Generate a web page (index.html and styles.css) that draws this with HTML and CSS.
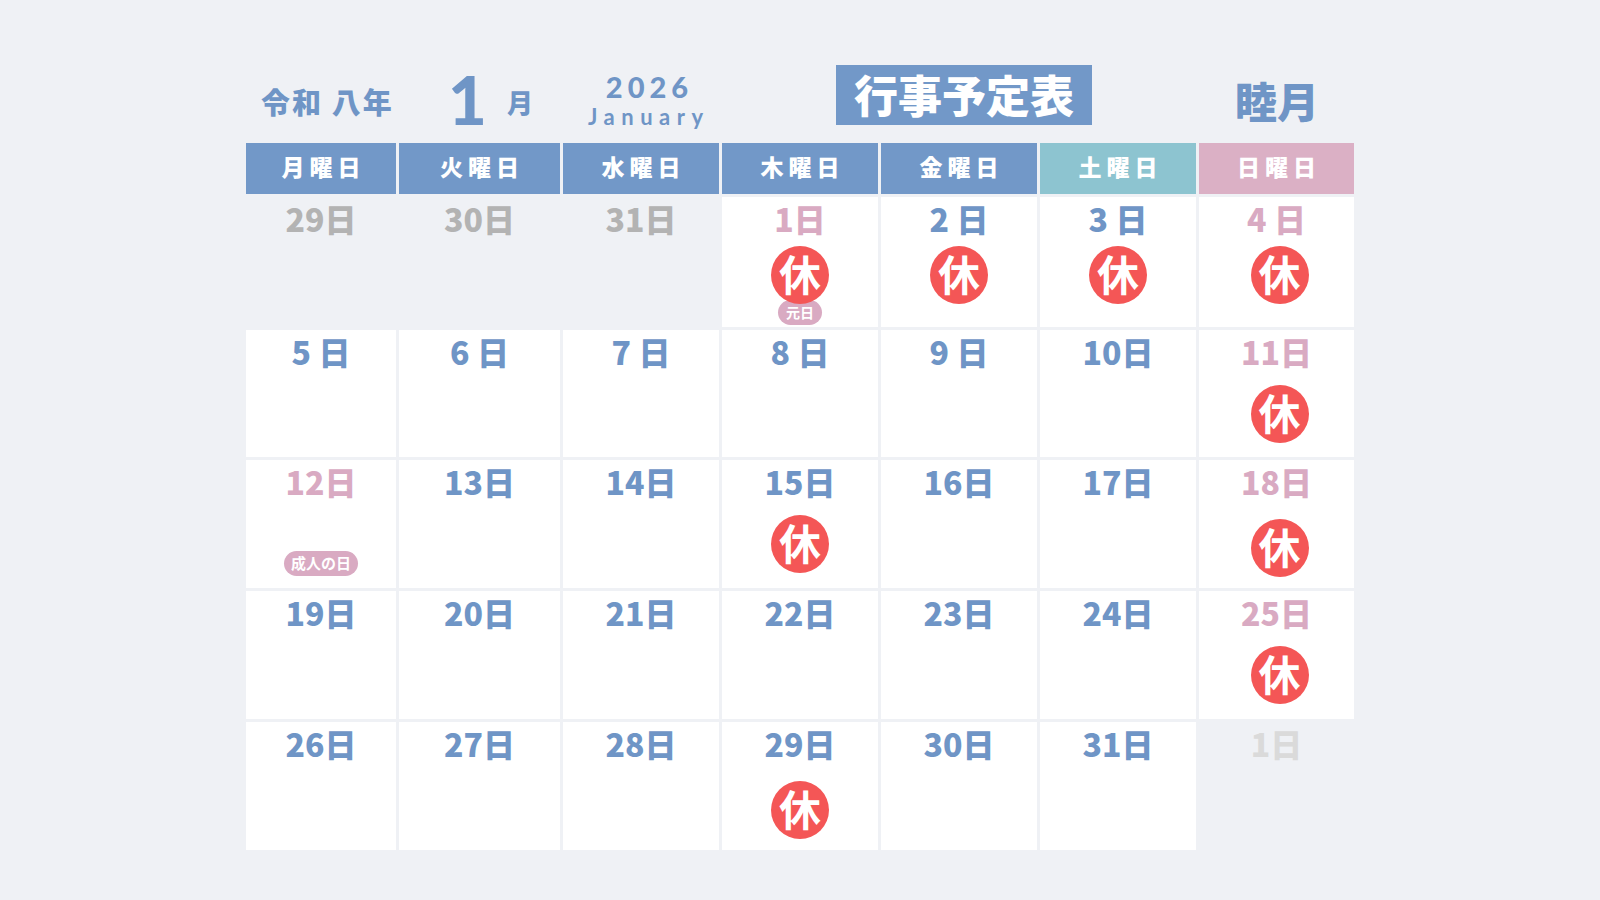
FILE: index.html
```html
<!DOCTYPE html>
<html lang="ja">
<head>
<meta charset="utf-8">
<title>行事予定表 2026年1月</title>
<link rel="stylesheet" href="styles.css">
</head>
<body>
<div class="page">
  <header class="top">
    <div class="era">令和 八年</div>
    <div class="month"><span class="month-num">1</span><span class="month-unit">月</span></div>
    <div class="year"><div class="year-num">2026</div><div class="year-en">January</div></div>
    <h1 class="title">行事予定表</h1>
    <div class="wafu">睦月</div>
  </header>
  <div class="cal">
    <div class="wd">月曜日</div>
    <div class="wd">火曜日</div>
    <div class="wd">水曜日</div>
    <div class="wd">木曜日</div>
    <div class="wd">金曜日</div>
    <div class="wd sat">土曜日</div>
    <div class="wd sun">日曜日</div>

    <div class="day other prev"><span class="num">29日</span></div>
    <div class="day other prev"><span class="num">30日</span></div>
    <div class="day other prev"><span class="num">31日</span></div>
    <div class="day holiday"><span class="num">1日</span><span class="rest rest-up">休</span><span class="tag tag-under">元日</span></div>
    <div class="day"><span class="num">2 日</span><span class="rest rest-up">休</span></div>
    <div class="day"><span class="num">3 日</span><span class="rest rest-up">休</span></div>
    <div class="day holiday sunday"><span class="num">4 日</span><span class="rest rest-up">休</span></div>

    <div class="day"><span class="num">5 日</span></div>
    <div class="day"><span class="num">6 日</span></div>
    <div class="day"><span class="num">7 日</span></div>
    <div class="day"><span class="num">8 日</span></div>
    <div class="day"><span class="num">9 日</span></div>
    <div class="day"><span class="num">10日</span></div>
    <div class="day holiday sunday"><span class="num">11日</span><span class="rest">休</span></div>

    <div class="day holiday"><span class="num">12日</span><span class="tag tag-bottom">成人の日</span></div>
    <div class="day"><span class="num">13日</span></div>
    <div class="day"><span class="num">14日</span></div>
    <div class="day"><span class="num">15日</span><span class="rest">休</span></div>
    <div class="day"><span class="num">16日</span></div>
    <div class="day"><span class="num">17日</span></div>
    <div class="day holiday sunday"><span class="num">18日</span><span class="rest rest-low">休</span></div>

    <div class="day"><span class="num">19日</span></div>
    <div class="day"><span class="num">20日</span></div>
    <div class="day"><span class="num">21日</span></div>
    <div class="day"><span class="num">22日</span></div>
    <div class="day"><span class="num">23日</span></div>
    <div class="day"><span class="num">24日</span></div>
    <div class="day holiday sunday"><span class="num">25日</span><span class="rest">休</span></div>

    <div class="day"><span class="num">26日</span></div>
    <div class="day"><span class="num">27日</span></div>
    <div class="day"><span class="num">28日</span></div>
    <div class="day"><span class="num">29日</span><span class="rest rest-low">休</span></div>
    <div class="day"><span class="num">30日</span></div>
    <div class="day"><span class="num">31日</span></div>
    <div class="day other next"><span class="num">1日</span></div>
  </div>
</div>
</body>
</html>
```

FILE: styles.css
```css
html, body {
  margin: 0;
  padding: 0;
}

body {
  width: 1600px;
  height: 900px;
  overflow: hidden;
  background: #eff1f5;
  color: #6f95c6;
  font-family: "Noto Sans CJK JP", "Noto Sans", sans-serif;
}

.page {
  padding: 62px 0 0 246px;
  width: 1108px;
}

/* ---------- title row ---------- */
.top {
  display: flex;
  align-items: center;
  height: 80px;
  margin-bottom: 1px;
}

.era {
  width: 193px;
  padding-left: 15px;
  font-size: 29px;
  font-weight: 900;
  letter-spacing: 2px;
  line-height: 1;
  white-space: nowrap;
  margin-bottom: 2px;
}

.month {
  width: 134px;
  display: flex;
  align-items: center;
}

.month-num {
  font-family: "Lato", "Liberation Sans", sans-serif;
  font-size: 67px;
  font-weight: 900;
  line-height: 1;
  margin-left: -6px;
  margin-bottom: 5px;
}

.month-unit {
  font-size: 26px;
  font-weight: 900;
  line-height: 1;
  margin-left: 20px;
}

.year {
  width: 118px;
  margin-right: 130px;
  margin-bottom: 4px;
  text-align: center;
  font-family: "Lato", "Liberation Sans", sans-serif;
  font-weight: 900;
  line-height: 1;
}

.year-num {
  font-size: 29px;
  letter-spacing: 5px;
  padding-left: 5px;
}

.year-en {
  font-size: 22px;
  letter-spacing: 6.5px;
  padding-right: 5px;
  margin-top: 5px;
  font-weight: 700;
}

.title {
  margin: 0 0 14px 0;
  width: 256px;
  height: 60px;
  background: #7298c8;
  color: #ffffff;
  font-size: 44px;
  font-weight: 900;
  line-height: 58px;
  text-align: center;
  white-space: nowrap;
}

.wafu {
  margin-left: 143px;
  margin-bottom: 4px;
  font-size: 42px;
  font-weight: 900;
  line-height: 1;
  white-space: nowrap;
}

/* ---------- calendar grid ---------- */
.cal {
  display: grid;
  grid-template-columns: 150px 161px 156px 156px 156px 156px 155px;
  grid-template-rows: 51px 130px 127px 128px 128px 128px;
  gap: 3px;
}

.wd {
  display: flex;
  align-items: center;
  justify-content: center;
  background: #7298c8;
  color: #ffffff;
  font-size: 23px;
  font-weight: 900;
  letter-spacing: 5px;
  padding-left: 5px;
  padding-bottom: 4px;
  line-height: 1;
}

.wd.sat {
  background: #8dc4d0;
}

.wd.sun {
  background: #dbb0c5;
}

.day {
  background: #ffffff;
  display: flex;
  flex-direction: column;
  align-items: center;
}

.day.other {
  background: transparent;
}

.num {
  padding-top: 5px;
  font-size: 32px;
  font-weight: 900;
  line-height: 1;
  white-space: pre;
  color: #6f95c6;
}

.holiday .num {
  color: #d9aac2;
}

.prev .num {
  color: #b3b3b3;
}

.next .num {
  color: #dadada;
}

.rest {
  position: relative;
  z-index: 1;
  width: 58px;
  height: 58px;
  margin-top: 18px;
  border-radius: 50%;
  background: #f45656;
  color: #ffffff;
  font-size: 42px;
  font-weight: 700;
  line-height: 54px;
  text-align: center;
}

.sunday .rest {
  margin-left: 6px;
}

.rest-up {
  margin-top: 12px;
}

.rest-low {
  margin-top: 22px;
}

.tag {
  height: 25px;
  padding: 0 8px;
  border-radius: 13px;
  background: #d9aac2;
  color: #ffffff;
  font-size: 14px;
  font-weight: 700;
  line-height: 24px;
  white-space: nowrap;
}

.tag-under {
  margin-top: -4px;
}

.tag-bottom {
  margin-top: auto;
  margin-bottom: 12px;
  font-size: 15px;
  padding: 0 7px;
}
```
